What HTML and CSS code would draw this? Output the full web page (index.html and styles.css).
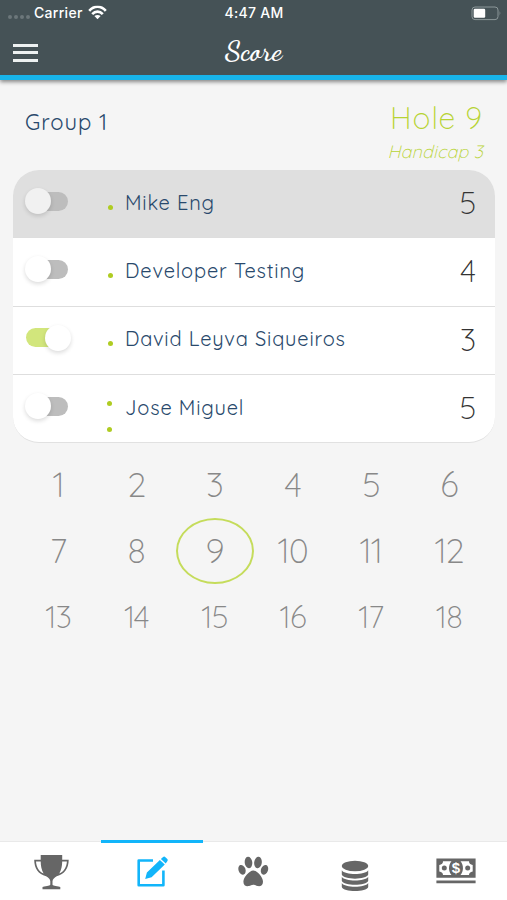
FILE: index.html
```
<!DOCTYPE html>
<html lang="en">
<head>
<meta charset="utf-8">
<title>Score</title>
<link rel="stylesheet" href="styles.css">
</head>
<body>
<header class="header">
  <div class="status">
    <div class="carrier">
      <span class="signal"><i></i><i></i><i></i><i></i></span>
      <span class="carrier-name">Carrier</span>
      <svg class="wifi" width="19" height="14" viewBox="0 0 19 14" fill="none" stroke="#fff" stroke-width="2.600"><path d="M1.200 5.300C6-.1 13-.1 17.800 5.300M4.200 8.600c3.100-3.300 7.500-3.300 10.600 0"/><path d="M9.500 13.700 6.400 10.600q3.100-2.400 6.200 0z" fill="#fff" stroke="none"/></svg>
    </div>
    <span class="time">4:47 AM</span>
    <svg class="battery" width="31" height="15" viewBox="0 0 31 15"><rect x="1" y="1" width="26" height="12.600" rx="3" fill="none" stroke="#8c9799"/><rect x="2.700" y="2.800" width="11.500" height="9" rx="1.200" fill="#fff"/><path d="M28.600 5v4.800q1.800-2.400 0-4.800z" fill="#8c9799"/></svg>
  </div>
  <div class="bar">
    <div class="menu"><i></i><i></i><i></i></div>
    <h1 class="title">Score</h1>
    <span></span>
  </div>
</header>
<main class="main">
  <section class="heading">
    <h2 class="group">Group 1</h2>
    <div class="hole-info"><div class="hole">Hole 9</div><div class="handicap">Handicap 3</div></div>
  </section>
  <section class="card">
    <div class="row selected"><span class="toggle"></span><span class="dots"><i></i></span><span class="name">Mike Eng</span><span class="score">5</span></div>
    <div class="row"><span class="toggle"></span><span class="dots"><i></i></span><span class="name">Developer Testing</span><span class="score">4</span></div>
    <div class="row"><span class="toggle on"></span><span class="dots"><i></i></span><span class="name">David Leyva Siqueiros</span><span class="score">3</span></div>
    <div class="row"><span class="toggle"></span><span class="dots two"><i></i><i></i></span><span class="name">Jose Miguel</span><span class="score">5</span></div>
  </section>
  <section class="holes">
    <span>1</span><span>2</span><span>3</span><span>4</span><span>5</span><span>6</span>
    <span>7</span><span>8</span><span class="current">9</span><span>10</span><span>11</span><span>12</span>
    <span class="small">13</span><span class="small">14</span><span class="small">15</span><span class="small">16</span><span class="small">17</span><span class="small">18</span>
  </section>
</main>
<nav class="tabs">
  <div class="tab"><svg width="36" height="36" viewBox="0 0 36 36" fill="#666"><path d="M7.700 1h21.500v4.800h6.500c0 8.500-4.200 14.600-12 16.500-2 1.600-4.200 2.600-4.200 5v3.200c0 1.200 3 1.500 7.800 2.400v2.300H9.500v-2.300c4.800-.9 7.800-1.200 7.800-2.400v-3.200c0-2.400-2-3.400-4.200-5C5.300 20.400 1.200 14.300 1.200 5.800h6.500zM3 7.600c.3 5.700 3.200 10.200 7.600 12C8.500 16 7.700 12 7.700 7.600zm26.200 0c0 4.400-.9 8.400-2.900 12 4.400-1.800 7.300-6.300 7.600-12z" fill-rule="evenodd"/></svg></div>
  <div class="tab active"><svg width="36" height="36" viewBox="0 0 36 36"><path d="M19 7.500H4.700v24.800h24.700V17.500" fill="none" stroke="#12b5fa" stroke-width="2.600" stroke-linejoin="round"/><path d="m11.200 26 1.700-6.500L25.900 6.900l4.900 4.700-13.200 12.600zM26.900 6l2.200-2q1.200-.9 2.300.2l1.900 1.900q1 1.100 0 2.200L31.700 10.500z" fill="#12b5fa"/></svg></div>
  <div class="tab"><svg width="32" height="34" viewBox="0 0 32 34" fill="#666"><ellipse cx="11.500" cy="7.500" rx="3.800" ry="5.700" transform="rotate(-7 11.500 7.500)"/><ellipse cx="21" cy="7.500" rx="3.800" ry="5.700" transform="rotate(7 21 7.500)"/><ellipse cx="5" cy="14.800" rx="3.500" ry="5" transform="rotate(-20 5 14.800)"/><ellipse cx="27.500" cy="14.800" rx="3.500" ry="5" transform="rotate(20 27.500 14.800)"/><path d="M16.200 15.500c3.800 0 9.800 6.800 9.800 11.200 0 3.800-2.800 5-5.400 4.400-2-.5-2.600-1.400-4.400-1.400s-2.400.9-4.400 1.400c-2.600.6-5.400-.6-5.400-4.400 0-4.400 6-11.200 9.800-11.200z"/></svg></div>
  <div class="tab"><svg class="coins" width="30" height="34" viewBox="0 0 30 34" fill="#666"><ellipse cx="15" cy="8" rx="13.200" ry="5.200"/><path d="M1.800 12.200c3 5 23.400 5 26.400 0v4.300c-1.500 5.500-24.900 5.500-26.400 0zM1.800 18.800c3 5 23.400 5 26.400 0v3.900c-1.500 5.500-24.900 5.500-26.400 0zM1.800 24.900c3 5 23.400 5 26.400 0v4c-1.500 5.500-24.900 5.500-26.400 0z"/></svg></div>
  <div class="tab"><svg class="cash" width="40" height="30" viewBox="0 0 40 30"><path d="M.4 1.500h39.200v19.200H.4zM.4 23.600h39.200v2.600H.4z" fill="#666"/><path d="M7 4.200h8.500c-3.300 4-3.300 9.800 0 13.800H7q0-3-3.700-3.500V8Q7 7.300 7 4.200zM33 4.200h-8.500c3.300 4 3.300 9.800 0 13.800H33q0-3 3.700-3.500V8Q33 7.300 33 4.200z" fill="#fff"/><circle cx="8.300" cy="11.100" r="2.500" fill="#666"/><circle cx="31.700" cy="11.100" r="2.500" fill="#666"/><text class="dollar" x="20" y="16" text-anchor="middle">$</text></svg></div>
</nav>
</body>
</html>
```
FILE: styles.css
```
* { box-sizing: border-box; }
body { margin: 0; width: 507px; height: 900px; background: #f5f5f5; display: flex; flex-direction: column; overflow: hidden; font-family: Quicksand, Lato, "Open Sans", sans-serif; }
.header { height: 80px; flex: none; background: #455256; border-bottom: 5px solid #18b4ea; box-shadow: 0 2px 4px rgba(0,0,0,.45); color: #fff; }
.status { height: 26px; padding: 0 5px 0 8px; display: grid; grid-template-columns: 1fr auto 1fr; align-items: center; font: 500 14px Inter, sans-serif; }
.carrier { display: flex; align-items: center; }
.signal { display: flex; gap: 2px; width: 26px; padding-top: 8px; }
.signal i { width: 4px; height: 4px; border-radius: 50%; background: #6c777a; }
.carrier-name { width: 54px; letter-spacing: .3px; transform: translateY(-1px); }
.time { margin-right: 2px; letter-spacing: .3px; transform: translateY(-1px); }
.wifi { transform: translateY(-.5px); }
.battery { justify-self: end; }
.bar { height: 49px; padding: 0 13px; display: grid; grid-template-columns: 1fr auto 1fr; align-items: center; }
.menu { width: 25px; display: flex; flex-direction: column; gap: 4.500px; padding-top: 4px; }
.menu i { height: 3px; background: #edf1f1; }
.title { margin: 0; font: 600 29px "Dancing Script", cursive; line-height: 40px; }
.main { flex: 1; }
.heading { height: 90px; padding: 0 24px 0 25px; display: flex; justify-content: space-between; }
.group { margin: 27px 0 0; font-size: 22px; line-height: 30px; font-weight: 400; color: #29496c; letter-spacing: .95px; }
.hole-info { padding-top: 20px; text-align: right; color: #b7d333; font-weight: 300; }
.hole { font-size: 30px; line-height: 36px; letter-spacing: 1px; }
.handicap { padding-top: 1px; font-size: 18px; line-height: 30px; font-style: italic; letter-spacing: .2px; }
.card { margin: 0 12px 0 13px; height: 273px; border-radius: 26px; overflow: hidden; background: #fff; border-bottom: 1px solid #e1e1e1; display: grid; grid-template-rows: repeat(4, 68.250px); }
.row { display: flex; align-items: center; border-bottom: 1px solid #dedede; padding: 0 19px 0 13px; }
.row:last-child { border-bottom: 0; }
.selected { background: #dfdfdf; }
.toggle { width: 42px; height: 19px; margin: -5px 39px 0 0; border-radius: 10px; background: #bdbdbd; display: flex; align-items: center; flex: none; }
.toggle::before { content: ""; width: 26px; height: 26px; margin-left: -1px; flex: none; border-radius: 50%; background: #fff; box-shadow: 0 2px 4px rgba(0,0,0,.14); }
.selected .toggle::before { background: #f1f1f1; }
.toggle.on { background: #d2e67c; }
.toggle.on::before { margin-left: 19px; }
.dots { width: 18px; display: flex; flex-direction: column; gap: 21px; padding-top: 7px; }
.dots.two { padding-top: 15px; }
.dots i { width: 5px; height: 5px; border-radius: 50%; background: #afcc22; }
.dots:not(.two) i { margin-left: 1px; }
.name { flex: 1; padding-bottom: 2px; font-size: 20px; line-height: 30px; color: #29496c; letter-spacing: .83px; }
.score { padding-bottom: 1px; font-size: 31px; line-height: 40px; font-weight: 300; color: #333; }
.holes { margin: 9px 18px 0 20px; display: grid; grid-template-columns: repeat(6, 1fr); grid-auto-rows: 66px; }
.holes span { display: flex; align-items: center; justify-content: center; font-size: 34px; font-weight: 300; color: #888; letter-spacing: -1px; padding: 0 2px 1px 0; border: 2px solid transparent; }
.holes .small { font-size: 31px; letter-spacing: -.8px; }
.holes .current { border-color: #c5dc5b; border-radius: 50%; }
.tabs { height: 59px; flex: none; background: #fff; border-top: 1px solid #e9e9e9; display: grid; grid-template-columns: repeat(5, 1fr); }
.tab { display: flex; align-items: center; justify-content: center; padding-top: 2px; }
.tab.active { margin-top: -2px; border-top: 3px solid #12b5fa; padding: 0 0 2px; }
.coins { margin-top: 5px; }
.dollar { font: 700 15px "Liberation Sans", sans-serif; fill: #fff; }
```
